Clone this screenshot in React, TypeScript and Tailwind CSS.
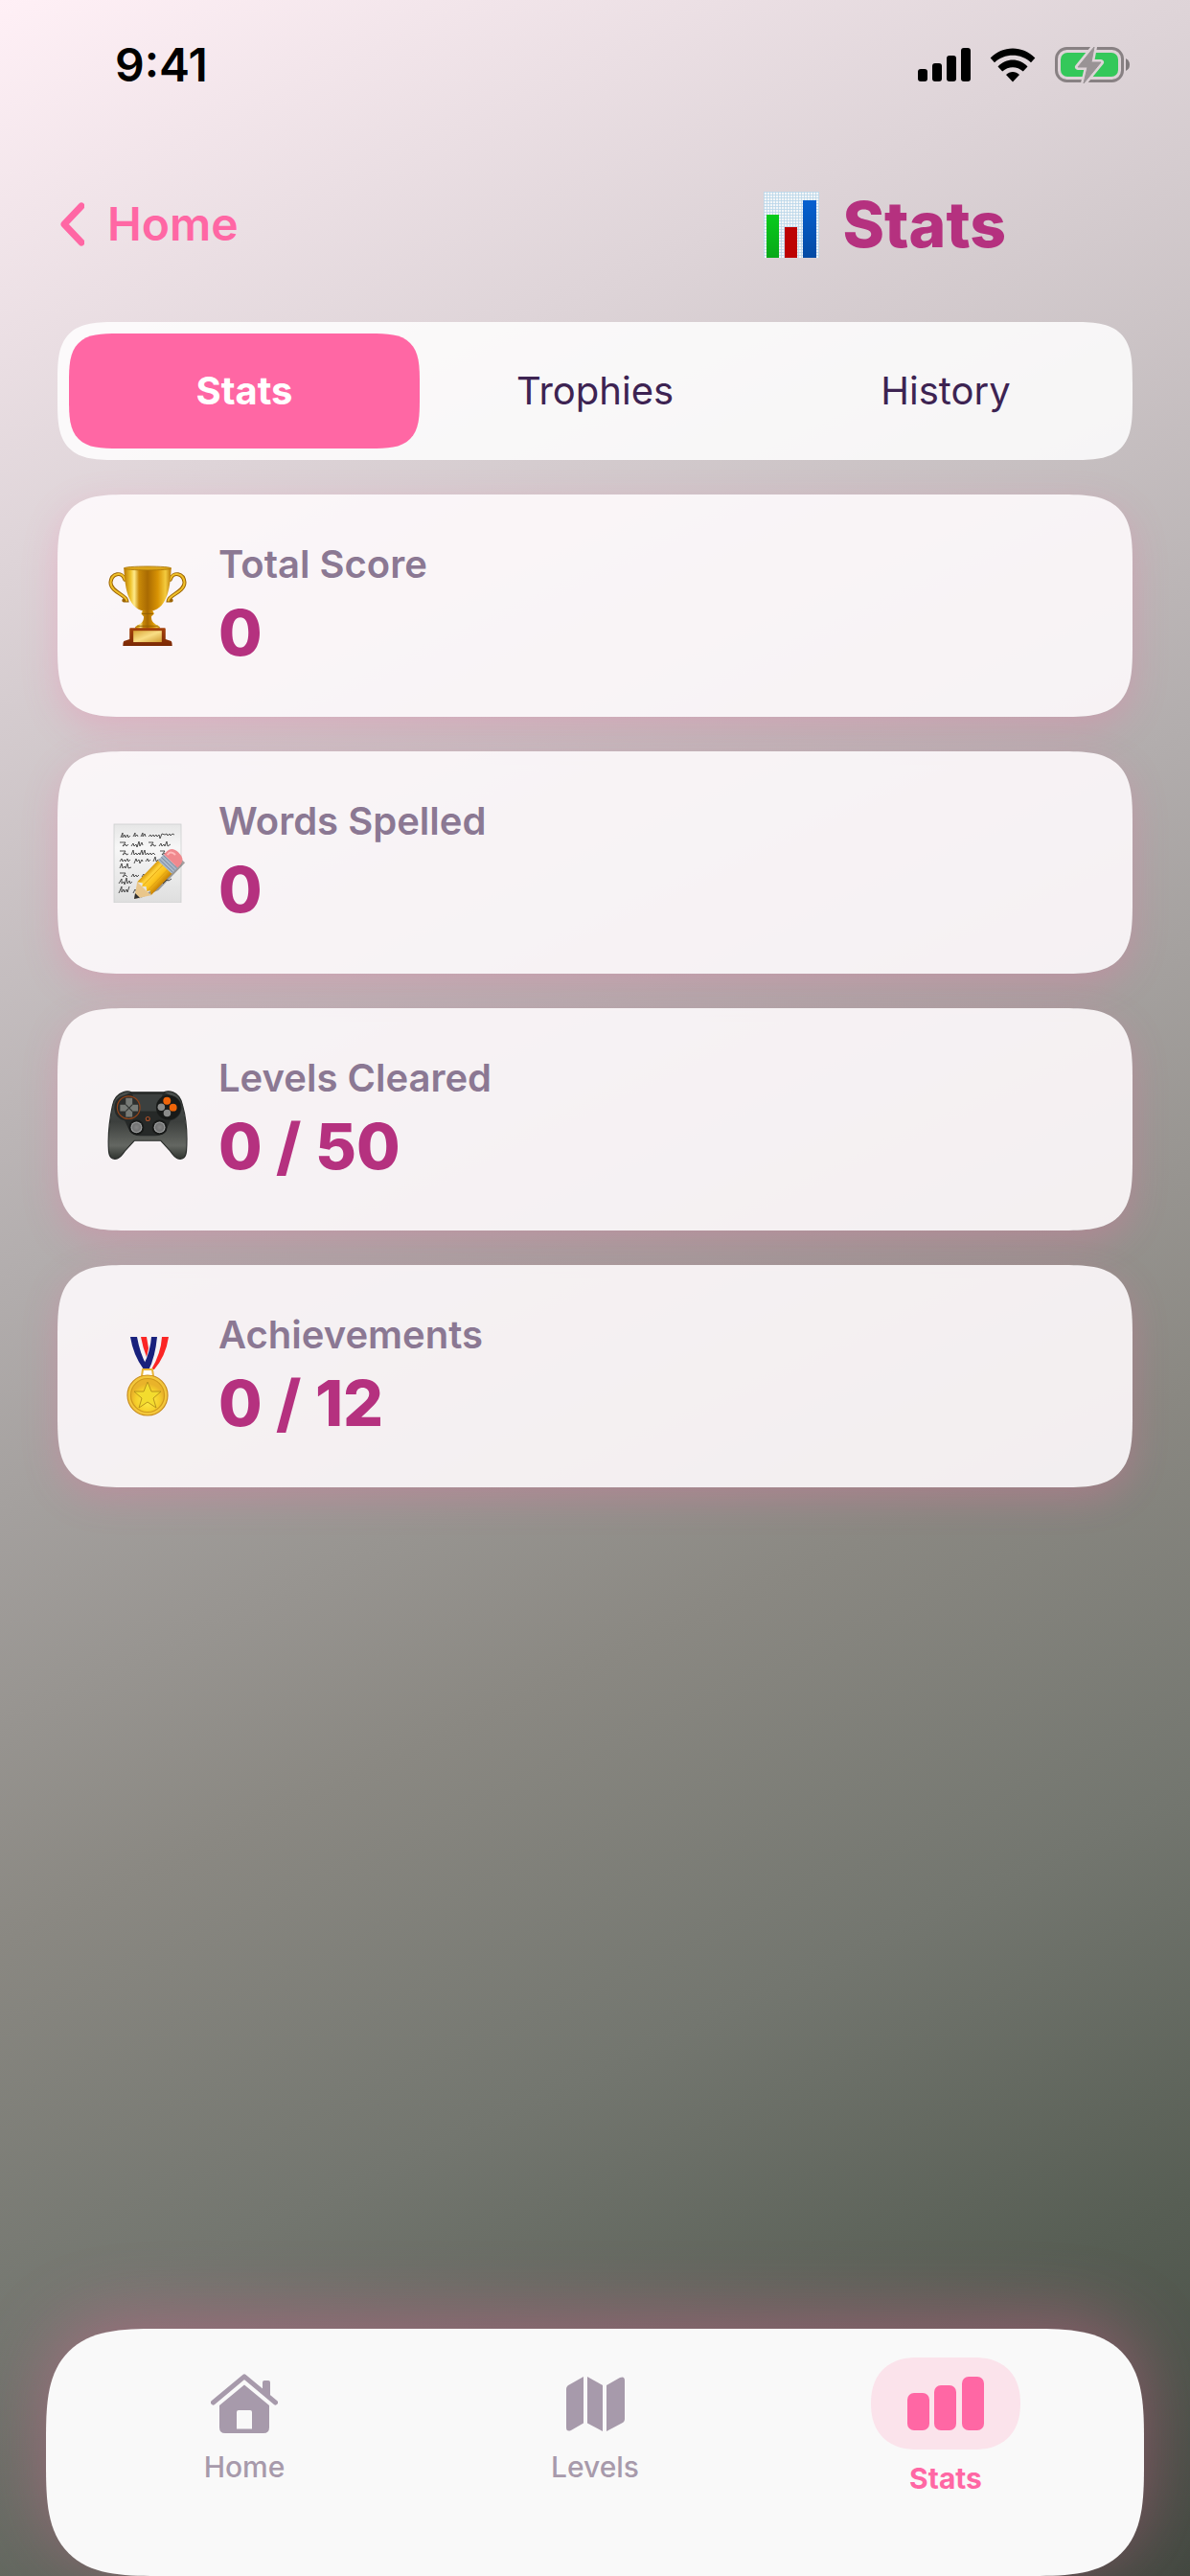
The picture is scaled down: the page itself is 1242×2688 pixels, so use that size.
import React, { useState } from 'react'

interface Stat {
  label: string
  value: string
  icon: React.ReactNode
}

const ChartEmoji = () => (
  <svg viewBox="0 0 58 69" className="w-[58px] h-[69px]" aria-hidden="true">
    <defs>
      <pattern id="grid" width="3" height="3" patternUnits="userSpaceOnUse">
        <rect width="3" height="3" fill="#f3f6f8" />
        <path d="M0 0.5H3M0.5 0V3" stroke="#b9d6e8" strokeWidth="0.8" />
      </pattern>
      <linearGradient id="green" x1="0" y1="0" x2="0" y2="1">
        <stop offset="0" stopColor="#08cb1c" />
        <stop offset="1" stopColor="#08a818" />
      </linearGradient>
      <linearGradient id="blue" x1="0" y1="0" x2="0" y2="1">
        <stop offset="0" stopColor="#0560d0" />
        <stop offset="1" stopColor="#044ba4" />
      </linearGradient>
    </defs>
    <rect width="58" height="69" fill="url(#grid)" />
    <rect x="3" y="24" width="13" height="45" fill="url(#green)" />
    <rect x="22" y="37" width="13" height="32" fill="#bd0202" />
    <rect x="41" y="9" width="14" height="60" fill="url(#blue)" />
  </svg>
)

const TrophyEmoji = () => (
  <svg viewBox="0 0 84 85" className="size-[84px]" aria-hidden="true">
    <defs>
      <linearGradient id="cup" x1="0" y1="0" x2="1" y2="0">
        <stop offset="0" stopColor="#b87804" />
        <stop offset="0.14" stopColor="#efc32c" />
        <stop offset="0.22" stopColor="#ffea8a" />
        <stop offset="0.32" stopColor="#c98a08" />
        <stop offset="0.5" stopColor="#a96a02" />
        <stop offset="0.72" stopColor="#d99404" />
        <stop offset="0.88" stopColor="#f4cb3e" />
        <stop offset="1" stopColor="#b87804" />
      </linearGradient>
      <linearGradient id="wood" x1="0" y1="0" x2="0" y2="1">
        <stop offset="0" stopColor="#a5420c" />
        <stop offset="1" stopColor="#7a2804" />
      </linearGradient>
      <linearGradient id="plaque" x1="0" y1="0" x2="1" y2="1">
        <stop offset="0" stopColor="#d9a637" />
        <stop offset="0.5" stopColor="#f9de85" />
        <stop offset="1" stopColor="#cf9b30" />
      </linearGradient>
    </defs>
    <g fill="none" strokeLinecap="round">
      <path d="M18 15C15 6 4 8 3 18C3 28 19 31 20 37L17 37" stroke="#9c6403" strokeWidth="4" />
      <path d="M18 15C15 6 4 8 3 18C3 28 19 31 20 37" stroke="#f0c02a" strokeWidth="2" />
      <path d="M66 15C69 6 80 8 81 18C81 28 65 31 64 37L67 37" stroke="#9c6403" strokeWidth="4" />
      <path d="M66 15C69 6 80 8 81 18C81 28 65 31 64 37" stroke="#f0c02a" strokeWidth="2" />
    </g>
    <path d="M17 3C18 20 20 45 38 48H46C64 45 66 20 67 3Z" fill="url(#cup)" />
    <ellipse cx="42" cy="3" rx="25" ry="2" fill="#dca51a" stroke="#a97306" strokeWidth="0.8" />
    <path d="M37 47H47L49 51L46 54C46 59 48 61 52 63C55 64 56 66 54 67H30C28 66 29 64 32 63C36 61 38 59 38 54L35 51Z" fill="url(#cup)" />
    <path d="M36 51H48M31 64H53" stroke="#936004" strokeWidth="1" />
    <path d="M23 67Q23 66 24 66H60Q61 66 61 67V78L67 80Q68 81 68 85H16Q16 81 17 80L23 78Z" fill="url(#wood)" />
    <rect x="27" y="69" width="30" height="12" fill="url(#plaque)" />
  </svg>
)

const MemoEmoji = () => (
  <svg viewBox="0 0 84 84" className="size-[84px]" aria-hidden="true">
    <defs>
      <linearGradient id="paper" x1="0" y1="0" x2="0" y2="1">
        <stop offset="0" stopColor="#e6e6e6" />
        <stop offset="0.3" stopColor="#f7f7f7" />
        <stop offset="1" stopColor="#dedede" />
      </linearGradient>
      <linearGradient id="pencil" x1="0" y1="0" x2="0" y2="1">
        <stop offset="0" stopColor="#d99a0a" />
        <stop offset="0.25" stopColor="#ffd23a" />
        <stop offset="0.6" stopColor="#fbc21c" />
        <stop offset="1" stopColor="#c98305" />
      </linearGradient>
    </defs>
    <rect x="7" y="2" width="70" height="82" fill="url(#paper)" stroke="#cdd0d0" strokeWidth="0.8" />
    <g fill="none" stroke="#3f3f3f" strokeWidth="0.9" strokeLinejoin="round">
      <path d="M14 16l2-5 0 5 2-3 1 3 2-3 1 3 2-2M27 15l2-4 0 4 2-2 1 2M35 15l2-4 0 4 2-3 1 3M43 15l2-2 1 2 2-2 1 2 2-2 1 2 2-2 1 4 2-5 3 1 2-1 1 2 2-2 1 2 2-2 2 1" />
      <path d="M13 21l6 0-3 4 3-2 1 2 2-2M25 25l2-3 1 3 2-2 1 3 2-6 1 5 2-4 1 3M43 21l5 0-3 4 3-2 1 2 2-1M54 25l2-3 1 3 2-2 1 2 2-5 1 5 3-2" />
      <path d="M13 30l6 0-3 4 3-2 1 2 2-1M25 34l2-5 1 5 2-2 1 2 2-2 1 2 2-5 1 5 2-5 1 5 2-2 1 2 2-2 1 2 2-2 2 2M55 30l5 0-3 4 3-2 2 2" />
      <path d="M13 41l2-3 1 3 2-2 1 2 2-3 1 3 2-2M28 43l2-5 1 3 2-2 1 4 2-4 1 2M40 41l2-3 1 3 2-2M48 41l2-5 1 5 2-2 2 1" />
      <path d="M13 48l2-5 1 5 2-2 1 2 2-5 1 5 3-1M13 53l6 0-3 4 3-2 2 2M25 57l2-3 1 3 2-2 1 2 2-2M36 57l2-3 1 3 2-2 2-2" />
      <path d="M12 64l3-5 0 5 2-2 1 3 2-7 1 6 2-3 1 3 2-2M12 74l3-7 0 6 2-3 1 3 2-3 1 3 2-6M27 74l2-4 2 3M58 64l4-4 2 1 3-2" />
    </g>
    <g transform="translate(28 80) rotate(-46)">
      <path d="M3 3L24 12H64V7H20Z" fill="#000000" opacity="0.35" />
      <path d="M0 0L15 -10V10Z" fill="#e9c68b" />
      <path d="M0 0L5 -3.4V3.4Z" fill="#2e2e30" />
      <path d="M15 -10L18 -5L15 -3L18 0L15 4L18 6L15 10H47V-10Z" fill="url(#pencil)" />
      <path d="M16 -3H47M16 4H47" stroke="#dfa011" strokeWidth="0.8" />
      <rect x="46" y="-10" width="9" height="20" fill="#a9b7c7" />
      <path d="M48 -10V10M51 -10V10M54 -10V10" stroke="#718195" strokeWidth="0.8" />
      <path d="M55 -10H60Q67 -9 67 0Q67 9 60 10H55Z" fill="#f0898e" />
      <path d="M57 -7H60Q63 -6 63 -1" stroke="#ffb9ba" strokeWidth="2" fill="none" />
    </g>
  </svg>
)

const ControllerEmoji = () => (
  <svg viewBox="0 0 84 85" className="size-[84px]" aria-hidden="true">
    <defs>
      <linearGradient id="pad" x1="0" y1="0" x2="0" y2="1">
        <stop offset="0" stopColor="#4b504e" />
        <stop offset="0.45" stopColor="#3c3f3d" />
        <stop offset="0.8" stopColor="#646762" />
        <stop offset="1" stopColor="#30342f" />
      </linearGradient>
      <radialGradient id="stick">
        <stop offset="0" stopColor="#858585" />
        <stop offset="0.7" stopColor="#717272" />
        <stop offset="1" stopColor="#b5b7b7" />
      </radialGradient>
    </defs>
    <path d="M16 14Q21 12 25 14H59Q64 12 69 14Q77 17 79 28C83 42 84 62 83 76Q82 86 74 84Q70 82 66 76L56 65H28L18 76Q14 82 10 84Q2 86 1 76C0 62 2 42 5 28Q7 17 16 14Z" fill="url(#pad)" stroke="#2a2d2b" strokeWidth="1.2" />
    <path d="M25 14H59L66 17Q79 20 78 32Q76 42 66 44L61 55Q57 60 50 60H34Q27 60 23 55L18 44Q8 42 7 32Q6 20 18 17Z" fill="#262928" />
    <path d="M26 16H58L52 34H32Z" fill="#464a49" opacity="0.7" />
    <circle cx="22" cy="30" r="12" fill="#2c2e2d" stroke="#91441a" strokeWidth="1.2" />
    <path d="M19 20H26V27H32V34H26V40H19V34H13V27H19Z" fill="#777a76" />
    <path d="M19 27L26 34M26 27L19 34" stroke="#343735" strokeWidth="1.2" />
    <circle cx="64" cy="30" r="13" fill="#181a19" />
    <circle cx="62.5" cy="23" r="4" fill="#ef6409" />
    <circle cx="69" cy="30" r="4" fill="#ef6409" />
    <circle cx="56.5" cy="29.5" r="3.8" fill="#8b8c8b" />
    <circle cx="62.7" cy="36" r="3.8" fill="#8b8c8b" />
    <circle cx="42.3" cy="42" r="2" fill="#222222" stroke="#a4502a" strokeWidth="1.2" />
    <circle cx="30.3" cy="51" r="8" fill="#171918" />
    <circle cx="54.7" cy="51" r="8" fill="#171918" />
    <circle cx="30.3" cy="51" r="6" fill="url(#stick)" />
    <circle cx="54.7" cy="51" r="6" fill="url(#stick)" />
  </svg>
)

const MedalEmoji = () => (
  <svg viewBox="0 0 84 84" className="size-[84px]" aria-hidden="true">
    <defs>
      <radialGradient id="gold" cx="0.5" cy="0.65">
        <stop offset="0" stopColor="#fff04a" />
        <stop offset="0.7" stopColor="#f5cf2a" />
        <stop offset="1" stopColor="#e9b32a" />
      </radialGradient>
    </defs>
    <path d="M24 1H44L50 36H39Q28 20 24 1Z" fill="#f3f3f5" />
    <path d="M24 1H31Q34 18 41 31L38 35Q27 20 24 1Z" fill="#18207c" />
    <path d="M35 1H41L43 13L41 22Q37 12 35 1Z" fill="#fb2524" />
    <path d="M46 1H64Q61 20 50 36H39Q44 20 46 1Z" fill="#f3f3f5" />
    <path d="M46 1H52Q50 22 43 36H39L38 30Q45 16 46 1Z" fill="#18207c" />
    <path d="M57 1H64Q61 21 49 35H46Q56 18 57 1Z" fill="#fb2524" />
    <path d="M36 42L37 35H47L48 42Z" fill="#ffffff" stroke="#e8b437" strokeWidth="2" />
    <circle cx="42" cy="62" r="21" fill="#f3c73c" stroke="#c98d1c" strokeWidth="1.2" />
    <circle cx="42" cy="62" r="17.500" fill="url(#gold)" stroke="#d19a1c" strokeWidth="1.2" />
    <path d="M42 48L46 58L56 58L48 65L51 75L42 69L33 75L36 65L28 58L38 58Z" fill="#f3dc2e" stroke="#b38d1a" strokeWidth="0.9" strokeLinejoin="round" />
  </svg>
)

const StatusIcons = () => (
  <div className="flex items-center gap-5">
    <svg viewBox="0 0 55 36" className="w-[55px] h-9" aria-hidden="true">
      <rect x="0" y="22" width="10" height="13" rx="3" />
      <rect x="15" y="16" width="10" height="19" rx="3" />
      <rect x="30" y="8" width="10" height="27" rx="3" />
      <rect x="45" y="0" width="10" height="35" rx="3" />
    </svg>
    <svg viewBox="0 0 48 36" className="w-12 h-9" aria-hidden="true">
      <path d="M0.7 10.5C13 -3 35 -3 47.3 10.5L43 15.2C33 5.200 15 5.200 5 15.200Z" />
      <path d="M8.5 19.5C17 10.3 31 10.3 39.5 19.5L34.800 24.500C28.500 18.800 19.500 18.800 13.200 24.500Z" />
      <path d="M17 28C21 24 27 24 31 28L24 35.5Z" />
    </svg>
    <svg viewBox="0 0 80 40" className="w-20 h-10" aria-hidden="true">
      <defs>
        <mask id="bolt-gap">
          <rect width="80" height="40" fill="#ffffff" />
          <path d="M41 1L24 22H34L30 39L48 17H38Z" fill="#000000" stroke="#000000" strokeWidth="6" strokeLinejoin="round" />
        </mask>
      </defs>
      <g mask="url(#bolt-gap)">
        <rect x="1.5" y="2.5" width="69" height="34" rx="11" fill="none" stroke="#888183" strokeWidth="3" />
        <rect x="6" y="7" width="60" height="25" rx="7" fill="#34c85a" />
      </g>
      <path d="M41 1L24 22H34L30 39L48 17H38Z" fill="#999395" stroke="#999395" strokeWidth="1" strokeLinejoin="round" />
      <path d="M74 13Q78 15 78 19.5Q78 24 74 26Z" fill="#807a7c" />
    </svg>
  </div>
)

const HomeIcon = () => (
  <svg viewBox="0 0 70 62" className="w-[70px] h-[62px]" fill="currentColor" aria-hidden="true">
    <path d="M2.5 30L35 2.8L67.5 30" fill="none" stroke="currentColor" strokeWidth="5" strokeLinecap="round" strokeLinejoin="round" />
    <path d="M54 20V9Q54 7 56 7H60Q62 7 62 9V25Z" />
    <path fillRule="evenodd" d="M35 11.5L61 33V56Q61 62 55 62H15Q9 62 9 56V33ZM29 38Q27 38 27 40V57.5H43V40Q43 38 41 38Z" />
  </svg>
)

const MapIcon = () => (
  <svg viewBox="0 0 61 57" className="w-[61px] h-[57px]" fill="currentColor" aria-hidden="true">
    <path d="M18 0V48.5L5 56Q0 58 0 53V13Q0 10 3 8.5Z" />
    <path d="M22 0L38 9V57L22 48.5Z" />
    <path d="M42 9L56 1Q61 -1 61 4V44Q61 47 58 48.5L42 57Z" />
  </svg>
)

const BarsIcon = () => (
  <svg viewBox="0 0 80 56" className="w-20 h-14" fill="currentColor" aria-hidden="true">
    <rect x="0" y="17" width="23" height="39" rx="7" />
    <rect x="28" y="9" width="23" height="47" rx="7" />
    <rect x="57" y="0" width="23" height="56" rx="7" />
  </svg>
)

const tabs = ['Stats', 'Trophies', 'History']

const stats: Stat[] = [
  { label: 'Total Score', value: '0', icon: <TrophyEmoji /> },
  { label: 'Words Spelled', value: '0', icon: <MemoEmoji /> },
  { label: 'Levels Cleared', value: '0 / 50', icon: <ControllerEmoji /> },
  { label: 'Achievements', value: '0 / 12', icon: <MedalEmoji /> },
]

const navItems = [
  { label: 'Home', icon: <HomeIcon /> },
  { label: 'Levels', icon: <MapIcon /> },
  { label: 'Stats', icon: <BarsIcon /> },
]

const App: React.FC = () => {
  const [tab, setTab] = useState('Stats')
  const [page, setPage] = useState('Stats')

  return (
    <div className="min-h-screen flex flex-col font-['Inter',sans-serif] bg-[linear-gradient(155deg,#fff0f6_0%,#ded4d8_18%,#b2adad_41%,#8a8882_62%,#73766f_75%,#575e54_88%,#434941_100%)]">
      {/* Status bar */}
      <div className="h-[136px] pl-[120px] pr-[61px] flex items-center justify-between">
        <span className="text-[48px] font-semibold text-black">9:41</span>
        <StatusIcons />
      </div>

      {/* Header */}
      <header className="pt-[58px] pb-[62px] pl-[60px] pr-[192px] flex items-center justify-between">
        <button type="button" className="flex items-center gap-6 text-[48px] leading-[80px] font-semibold text-[#ff67a4]">
          <svg viewBox="0 0 28 46" className="w-7 h-[46px]" fill="none" stroke="currentColor" strokeWidth="7" strokeLinecap="round" strokeLinejoin="round" aria-hidden="true">
            <path d="M25 4L7 23L25 42" />
          </svg>
          Home
        </button>
        <h1 className="flex items-center gap-6 text-[66px] leading-[80px] font-extrabold text-[#b5317f]">
          <ChartEmoji />
          Stats
        </h1>
      </header>

      <main className="px-[60px] flex flex-col gap-9">
        {/* Tabs */}
        <div className="grid grid-cols-3 p-3 rounded-[64px] [corner-shape:superellipse(1.7)] bg-white/85" role="tablist">
          {tabs.map((name) => (
            <button
              key={name}
              type="button"
              role="tab"
              aria-selected={tab === name}
              onClick={() => setTab(name)}
              className={
                tab === name
                  ? 'h-[120px] rounded-[52px] [corner-shape:superellipse(1.7)] text-[40px] font-bold bg-[#ff67a4] text-white'
                  : 'h-[120px] rounded-[52px] text-[40px] text-[#3d2352]'
              }
            >
              {name}
            </button>
          ))}
        </div>

        {/* Stat cards */}
        {stats.map((stat) => (
          <section
            key={stat.label}
            className="px-[52px] py-12 flex items-center gap-8 rounded-[76px] [corner-shape:superellipse(1.7)] bg-[#fef9fc]/90 shadow-[0_12px_36px_rgba(255,103,164,0.25)]"
          >
            {stat.icon}
            <div className="flex flex-col gap-[6px]">
              <p className="text-[40px] leading-[50px] font-semibold text-[#8b7893]">{stat.label}</p>
              <p className="text-[66px] leading-[80px] font-extrabold text-[#b5317f]">{stat.value}</p>
            </div>
          </section>
        ))}
      </main>

      {/* Bottom navigation */}
      <nav className="mt-auto mx-12 px-6 pt-[30px] pb-[84px] grid grid-cols-3 items-start rounded-[116px] [corner-shape:superellipse(1.6)] bg-[#f9f9f9] shadow-[0_-12px_72px_rgba(255,103,164,0.35)]">
        {navItems.map((item) => (
          <button
            key={item.label}
            type="button"
            onClick={() => setPage(item.label)}
            className={
              page === item.label
                ? 'flex flex-col items-center gap-3 text-[30px] leading-9 font-bold text-[#ff67a4]'
                : 'pt-3 flex flex-col items-center gap-3 text-[30px] leading-9 font-medium text-[#a79aab]'
            }
          >
            <span
              className={
                page === item.label
                  ? 'w-[156px] h-24 flex items-center justify-center rounded-[48px] [corner-shape:superellipse(1.2)] bg-[#fbe3eb]'
                  : 'h-[72px] flex items-center justify-center'
              }
            >
              {item.icon}
            </span>
            {item.label}
          </button>
        ))}
      </nav>
    </div>
  )
}

export default App
